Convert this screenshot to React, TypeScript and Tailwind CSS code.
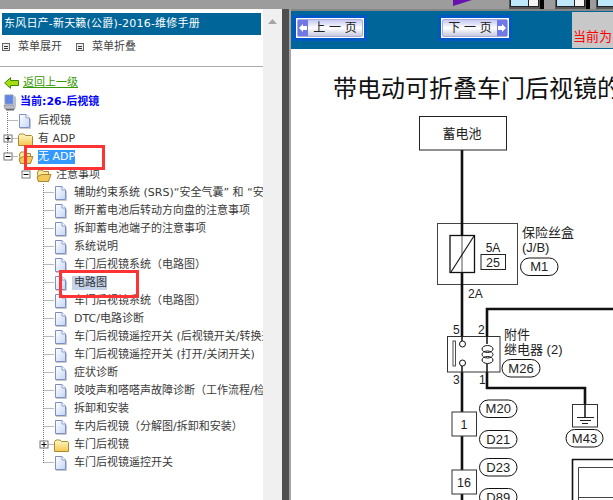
import React from "react";

type Row = {
  level: number;
  icon: "doc" | "folder" | "open";
  text: string;
  toggle?: "plus" | "minus";
  last?: boolean;
  selected?: "active" | "soft";
};

const rows: Row[] = [
  { level: 1, icon: "doc", text: "后视镜" },
  { level: 1, icon: "folder", text: "有 ADP", toggle: "plus" },
  { level: 1, icon: "open", text: "无 ADP", toggle: "minus", last: true, selected: "active" },
  { level: 2, icon: "open", text: "注意事项", toggle: "minus", last: true },
  { level: 3, icon: "doc", text: "辅助约束系统 (SRS)“安全气囊” 和 “安全带预张紧器”" },
  { level: 3, icon: "doc", text: "断开蓄电池后转动方向盘的注意事项" },
  { level: 3, icon: "doc", text: "拆卸蓄电池端子的注意事项" },
  { level: 3, icon: "doc", text: "系统说明" },
  { level: 3, icon: "doc", text: "车门后视镜系统（电路图）" },
  { level: 3, icon: "doc", text: "电路图", selected: "soft" },
  { level: 3, icon: "doc", text: "车门后视镜系统（电路图）" },
  { level: 3, icon: "doc", text: "DTC/电路诊断" },
  { level: 3, icon: "doc", text: "车门后视镜遥控开关 (后视镜开关/转换开关)" },
  { level: 3, icon: "doc", text: "车门后视镜遥控开关 (打开/关闭开关)" },
  { level: 3, icon: "doc", text: "症状诊断" },
  { level: 3, icon: "doc", text: "吱吱声和嗒嗒声故障诊断（工作流程/检查）" },
  { level: 3, icon: "doc", text: "拆卸和安装" },
  { level: 3, icon: "doc", text: "车内后视镜（分解图/拆卸和安装）" },
  { level: 3, icon: "folder", text: "车门后视镜", toggle: "plus" },
  { level: 3, icon: "doc", text: "车门后视镜遥控开关", last: true },
];

const DocIcon = () => (
  <svg width="13" height="15" viewBox="0 0 13 15">
    <defs>
      <linearGradient id="doc" x1="0" y1="0" x2="1" y2="1">
        <stop offset="0" stopColor="#ffffff" />
        <stop offset="1" stopColor="#c4d6f4" />
      </linearGradient>
    </defs>
    <path d="M1.5.5H8L11.5 4V13.5H1.5Z" fill="url(#doc)" stroke="#7d8fc4" />
    <path d="M8 .5V4H11.5" fill="#fff" stroke="#8d9dcc" />
    <path d="M2 14.5H12.5V5" fill="none" stroke="#c9c9c9" />
  </svg>
);

const FolderIcon = () => (
  <svg width="15" height="13" viewBox="0 0 15 13">
    <defs>
      <linearGradient id="fold" x1="0" y1="0" x2="0" y2="1">
        <stop offset="0" stopColor="#fff8c8" />
        <stop offset="1" stopColor="#f4c850" />
      </linearGradient>
    </defs>
    <path d="M.5 2.5L2 1H6L7.5 2.5H13.5L14.5 3.5V12.5H.5Z" fill="url(#fold)" stroke="#a98a34" />
  </svg>
);

const OpenFolderIcon = () => (
  <svg width="16" height="13" viewBox="0 0 16 13">
    <path d="M1.5 3L3 1H6L7.5 2.5H12.5V12.5H2.5Z" fill="#fde79a" stroke="#a98a34" />
    <path d="M5.5 5.5H15L12.5 12.5H2.5L1 8Z" fill="#f3c95b" stroke="#a98a34" />
  </svg>
);

// dotted tree lines plus the +/- box, drawn per row
const TreeGuide = ({ row }: { row: Row }) => {
  const w = row.level * 18;
  const x = w - 10.5;
  return (
    <svg width={w} height="18" viewBox={`0 0 ${w} 18`} className="shrink-0">
      {row.level !== 2 && (
        <path d={`M${x} 0V${row.last ? 9 : 18}`} stroke="#777" strokeDasharray="1 1" />
      )}
      {row.level !== 2 && (
        <path d={`M${x} 8.5H${w}`} stroke="#777" strokeDasharray="1 1" />
      )}
      {row.toggle && (
        <g>
          <rect x={x - 3.5} y="5" width="8" height="7" fill="#fff" stroke="#777" />
          <path d={`M${x - 2} 8.5H${x + 3}`} stroke="#000" />
          {row.toggle === "plus" && <path d={`M${x + 0.5} 6V11`} stroke="#000" />}
        </g>
      )}
    </svg>
  );
};

const TreeRow = ({ row }: { row: Row }) => (
  <div className="flex h-[18px] items-center whitespace-nowrap">
    <TreeGuide row={row} />
    <div className="flex w-[20px] shrink-0 items-center">
      {row.icon === "doc" && <DocIcon />}
      {row.icon === "folder" && <FolderIcon />}
      {row.icon === "open" && <OpenFolderIcon />}
    </div>
    <span
      className={
        row.selected === "active"
          ? "bg-[#3399ff] leading-[14px] text-white"
          : row.selected === "soft"
            ? "-ml-[2px] bg-[#c3d3ea] pl-[2px] leading-[14px] text-[#333]"
            : "leading-[14px] text-[#3a3a3a]"
      }
    >
      {row.text}
    </span>
  </div>
);

const MenuIcon = () => (
  <span className="flex h-[8px] w-[8px] flex-col justify-center gap-[1px] border border-[#666] bg-[#eee] px-[1px]">
    <span className="h-px bg-[#333]" />
    <span className="h-px bg-[#333]" />
  </span>
);

const PageButton = ({ label, dir, className }: { label: string; dir: "prev" | "next"; className: string }) => (
  <div className={`h-[26px] w-[74px] border-[3px] border-[#0058c4] bg-white p-px ${className}`}>
    <div
      className={`flex h-full items-center rounded-[2px] border border-[#a9add8] bg-gradient-to-b from-[#c5c9f2] via-[#ffffff] to-[#c8cadf] ${dir === "next" ? "flex-row-reverse" : ""}`}
    >
      <div className="flex h-full w-[10px] shrink-0 items-center justify-center bg-[#6f78e4]">
        <svg width="8" height="8" viewBox="0 0 8 8">
          <path d={dir === "prev" ? "M0 4L4 0V2H8V6H4V8Z" : "M8 4L4 0V2H0V6H4V8Z"} fill="#fff" />
        </svg>
      </div>
      <span className="flex-1 text-center text-[12px] leading-none whitespace-pre text-[#222]">
        {label}
      </span>
    </div>
  </div>
);

const Thumb = ({ className }: { className: string }) => (
  <div className={`h-[9px] w-[35px] border-r-4 border-black bg-[#555] pt-0 pr-px pl-px ${className}`}>
    <div className="flex h-[7px] gap-px border-x border-b border-[#222] bg-[#222]">
      <div className="flex-1 bg-[#bfe8fa]" />
      <div className="w-[9px] bg-[#f4f4f4]" />
    </div>
  </div>
);

const Pill = ({ x, y, w, label }: { x: number; y: number; w: number; label: string }) => (
  <g>
    <rect x={x} y={y} width={w} height="17.5" rx="8.7" fill="#fff" stroke="#111" strokeWidth="1" />
    <text x={x + w / 2} y={y + 13.4} textAnchor="middle" fontSize="13" fill="#222">
      {label}
    </text>
  </g>
);

const Diagram = () => (
  <svg
    width="322"
    height="395"
    viewBox="291 105 322 395"
    className="block [font-family:'Liberation_Sans','Noto_Sans_CJK_SC',sans-serif]"
  >
    {/* wires */}
    <path d="M462 150V223M462 284V336M462 372V500" stroke="#111" strokeWidth="2.6" fill="none" />
    <path d="M487 336V309H613" stroke="#111" strokeWidth="2.6" fill="none" />
    <path d="M487 372V388H585V405" stroke="#111" strokeWidth="2.6" fill="none" />

    <rect x="419.5" y="116.5" width="87" height="33.5" fill="#fff" stroke="#222" />
    <text x="462" y="138" textAnchor="middle" fontSize="13" fill="#222">蓄电池</text>

    {/* fuse box */}
    <rect x="437.5" y="223.5" width="80" height="61" fill="#fff" stroke="#444" />
    <path d="M462 223V235M462 272V285" stroke="#111" strokeWidth="2.6" />
    <rect x="450" y="235.5" width="24.5" height="37" fill="#fff" stroke="#111" strokeWidth="1.3" />
    <path d="M462 236V272" stroke="#555" />
    <path d="M451 272L474 236" stroke="#111" strokeWidth="1.1" />
    <text x="493" y="252" textAnchor="middle" fontSize="12" fill="#222">5A</text>
    <rect x="481" y="254.5" width="24.5" height="15" fill="#fff" stroke="#222" />
    <text x="493" y="267" textAnchor="middle" fontSize="12.5" fill="#222">25</text>
    <text x="522" y="237" fontSize="13" fill="#222">保险丝盒</text>
    <text x="522" y="252" fontSize="13" fill="#222">(J/B)</text>
    <Pill x={520.5} y={258} w={37.5} label="M1" />
    <text x="468" y="298" fontSize="12" fill="#222">2A</text>

    {/* relay */}
    <text x="453" y="334" fontSize="12" fill="#222">5</text>
    <text x="478" y="334" fontSize="12" fill="#222">2</text>
    <text x="504" y="339" fontSize="13" fill="#222">附件</text>
    <text x="504" y="354" fontSize="13" fill="#222">继电器 (2)</text>
    <rect x="447.5" y="336.5" width="52.5" height="35.5" fill="#fff" stroke="#333" />
    <rect x="453" y="341" width="2.5" height="25" fill="#fff" stroke="#222" strokeWidth="0.8" />
    <path d="M462 336V341M462 366V372M487 336V344M487 364V372" stroke="#111" strokeWidth="1.5" />
    <circle cx="462.5" cy="344" r="3" fill="#fff" stroke="#111" />
    <circle cx="462.5" cy="363" r="3" fill="#fff" stroke="#111" />
    <ellipse cx="487.5" cy="349" rx="5.5" ry="3.5" fill="none" stroke="#111" />
    <ellipse cx="487.5" cy="354.5" rx="5.5" ry="3.5" fill="none" stroke="#111" />
    <ellipse cx="487.5" cy="360" rx="5.5" ry="3.5" fill="none" stroke="#111" />
    <Pill x={502} y={359.5} w={38} label="M26" />
    <text x="453" y="384" fontSize="12" fill="#222">3</text>
    <text x="479" y="384" fontSize="12" fill="#222">1</text>

    {/* connectors */}
    <rect x="452" y="412" width="24.5" height="24" fill="#fff" stroke="#333" />
    <text x="464" y="429" textAnchor="middle" fontSize="12.5" fill="#222">1</text>
    <rect x="452" y="470" width="24.5" height="24" fill="#fff" stroke="#333" />
    <text x="464" y="487" textAnchor="middle" fontSize="12.5" fill="#222">16</text>
    <Pill x={479.5} y={400} w={37.5} label="M20" />
    <Pill x={479.5} y={430.5} w={37.5} label="D21" />
    <Pill x={479.5} y={458.5} w={37.5} label="D23" />
    <Pill x={479.5} y={488.5} w={37.5} label="D89" />

    {/* ground */}
    <rect x="572.5" y="404.5" width="25" height="22.5" fill="#fff" stroke="#333" />
    <path d="M585 404V417" stroke="#111" strokeWidth="1.5" />
    <path d="M577 417.5H594M580 420.5H591M582 423.5H588" stroke="#222" />
    <Pill x={566} y={429.5} w={37} label="M43" />

    {/* lower right unit */}
    <path d="M613 459.5H572.5V500" stroke="#111" strokeWidth="1.6" fill="none" />
    <path d="M613 467.5H578.5V500M579 497.5H613" stroke="#444" fill="none" />
  </svg>
);

export default function App() {
  return (
    <div className="relative flex h-[500px] w-[613px] flex-col overflow-hidden bg-white [font-family:'DejaVu_Sans','Noto_Sans_CJK_SC',sans-serif]">
      {/* strip of the window behind */}
      <div className="flex h-[9px] shrink-0 items-start bg-[#9c9c9c]">
        <svg width="20" height="6" viewBox="0 0 20 6" className="ml-[453px] shrink-0">
          <path d="M0 0H19L0 6Z" fill="#6a10b0" />
        </svg>
        <Thumb className="ml-[36px] shrink-0" />
        <Thumb className="ml-[11px] shrink-0" />
        <Thumb className="ml-[6px] shrink-0" />
      </div>

      <div className="flex min-h-0 flex-1">
        {/* left panel */}
        <div className="w-[263px] shrink-0 overflow-hidden pt-[4px] text-[11px]">
          <div className="mx-[2px] flex h-[22px] w-[259px] items-center bg-[#006699] pl-[2px] tracking-[0.2px] whitespace-nowrap text-white">
            东风日产-新天籁(公爵)-2016-维修手册
          </div>
          <div className="flex h-[24px] items-center pl-[2px] text-[#444]">
            <MenuIcon />
            <span className="ml-[8px]">菜单展开</span>
            <span className="ml-[14px]"><MenuIcon /></span>
            <span className="ml-[8px]">菜单折叠</span>
          </div>
          <div className="mt-[7px] h-px bg-[#aaaaaa]" />
          <div className="mt-[9px] flex h-[14px] items-center pl-[4px]">
            <svg width="15" height="12" viewBox="0 0 15 12" className="shrink-0">
              <path d="M.7 6L6.5.7V3.5H14.5V8.5H6.5V11.3Z" fill="#a6dc12" stroke="#3b8a00" />
            </svg>
            <a className="ml-[4px] text-[#339900] underline">返回上一级</a>
          </div>
          <div className="mt-[3px] flex h-[19px] items-center pl-[3px]">
            <svg width="14" height="17" viewBox="0 0 14 17" className="shrink-0">
              <path d="M2 1H10V10H2Z" fill="#5f86e6" stroke="#8a9bb8" />
              <path d="M10 1L13 3V14L10 11Z" fill="#b8bfd0" />
              <path d="M1 11H10L12 15H2Z" fill="#b9bdcc" stroke="#777" strokeWidth=".6" />
              <path d="M3 15H11V16.5H3Z" fill="#666" />
            </svg>
            <span className="ml-[3px] font-bold whitespace-nowrap text-[#0000ff]">当前:26-后视镜</span>
          </div>
          <div>
            {rows.map((row, i) => (
              <TreeRow key={i} row={row} />
            ))}
          </div>
        </div>

        {/* scrollbar */}
        <div className="flex w-[19px] shrink-0 justify-center bg-[#f0f0f0] pt-[10px]">
          <svg width="9" height="5" viewBox="0 0 9 5">
            <path d="M4.5 0L9 5H0Z" fill="#a6a6a6" />
          </svg>
        </div>
        <div className="w-[7px] shrink-0 bg-[#4f4f4f]" />
        <div className="w-[2px] shrink-0 bg-[#a3a3a3]" />

        {/* right panel */}
        <div className="min-w-0 flex-1">
          <div className="border-t-2 border-[#868686]">
            <div className="flex h-[38px] items-start bg-[#006699] pt-[4px]">
              <PageButton label="上 一 页" dir="prev" className="ml-[2px] shrink-0" />
              <PageButton label="下 一 页" dir="next" className="ml-[71px] shrink-0" />
              <div className="mt-[-3px] ml-[60px] flex h-[36px] flex-1 items-end bg-[#c8c8c8] pb-[3px] pl-px text-[13px] leading-[16px] whitespace-nowrap text-[#ff0000]">
                当前为
              </div>
            </div>
          </div>
          <div className="h-[56px] overflow-hidden pt-[24px] pl-[42px] text-[24px] leading-[28px] whitespace-nowrap text-[#111] [font-family:'Noto_Sans_CJK_SC',sans-serif]">
            带电动可折叠车门后视镜的电路图
          </div>
          <Diagram />
        </div>
      </div>

      {/* red markers someone drew over the screenshot */}
      <div className="absolute top-[145px] left-[24px] h-[25px] w-[81px] border-[3px] border-[#ff3333]" />
      <div className="absolute top-[270px] left-[59px] h-[28px] w-[80px] border-[3px] border-[#ff3333]" />
    </div>
  );
}
